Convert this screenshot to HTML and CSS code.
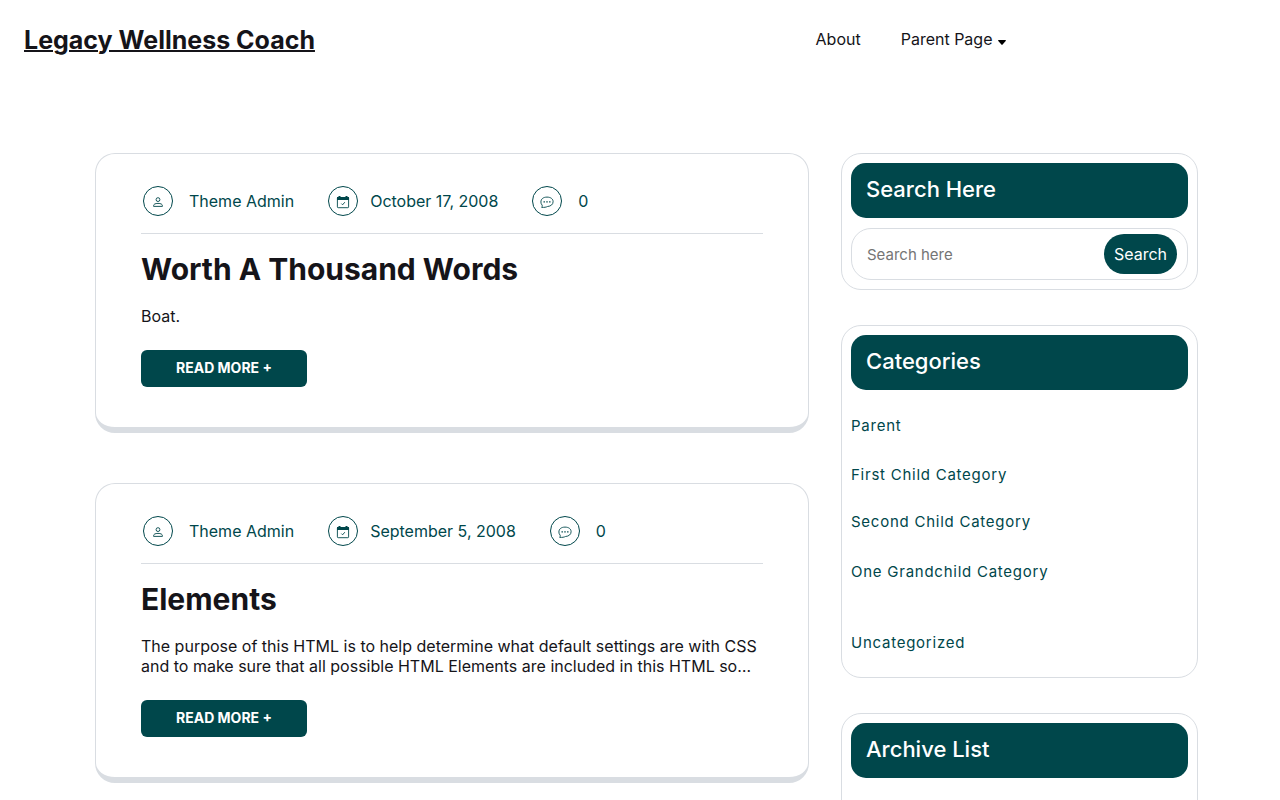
FILE: index.html
```
<!DOCTYPE html>
<html lang="en">
  <head>
    <meta charset="utf-8">
    <meta name="viewport" content="width=device-width, initial-scale=1">
    <title>Legacy Wellness Coach</title>
    <link rel="stylesheet" href="styles.css">
  </head>

  <body>
    <!-- shared icons -->
    <svg class="sprite" aria-hidden="true">
      <symbol id="icon-user" viewBox="0 0 14 14">
        <circle cx="7" cy="4.6" r="1.9"/>
        <path d="M2.6 11.4V10.7C2.6 9.2 4.2 8.4 7 8.4s4.4.8 4.4 2.3v.7z"/>
      </symbol>
      <symbol id="icon-date" viewBox="0 0 14 14">
        <rect x="1.4" y="2.5" width="11.2" height="10.2" rx="0.8"/>
        <path class="solid" d="M1 2h1.5V1h2v1h5V1h2v1H13v3H1z"/>
        <path d="M5.4 8.6l1.2 1.2 2.2-2.6"/>
      </symbol>
      <symbol id="icon-comment" viewBox="0 0 14 14">
        <path d="M1.7 12.4c.5-.7.6-1.3.5-2.2C1.3 9.300.9 8.300.9 7c0-3 2.300-4.900 6.100-4.900s6.100 1.900 6.100 4.600-2.300 4.600-5.600 4.800c-1.300.7-3.300 1-5.800.9z"/>
        <path class="solid" d="M3.500 6.200h1.400v1.400H3.500zM6.300 6.200h1.400v1.400H6.300zM9.100 6.200h1.400v1.400H9.100z"/>
      </symbol>
    </svg>

    <header class="site-header">
      <a class="site-title" href="#">Legacy Wellness Coach</a>
      <nav class="main-nav">
        <a href="#">About</a>
        <a href="#">Parent Page
          <svg class="caret" viewBox="0 0 8 5" aria-hidden="true"><path d="M.7 0h6.6c.6 0 .9.6.4 1L4.6 4.6c-.4.4-.8.4-1.2 0L.3 1C-.2.6.1 0 .7 0z"/></svg>
        </a>
      </nav>
    </header>

    <div class="container">
      <main class="posts">
        <article class="post">
          <div class="post-meta">
            <a class="meta" href="#"><span class="circle"><svg><use href="#icon-user"/></svg></span>Theme Admin</a>
            <a class="meta meta-date" href="#"><span class="circle"><svg><use href="#icon-date"/></svg></span>October 17, 2008</a>
            <a class="meta" href="#"><span class="circle"><svg><use href="#icon-comment"/></svg></span>0</a>
          </div>
          <h2 class="post-title">Worth A Thousand Words</h2>
          <p class="excerpt">Boat.</p>
          <a class="read-more" href="#">READ MORE +</a>
        </article>

        <article class="post">
          <div class="post-meta">
            <a class="meta" href="#"><span class="circle"><svg><use href="#icon-user"/></svg></span>Theme Admin</a>
            <a class="meta meta-date" href="#"><span class="circle"><svg><use href="#icon-date"/></svg></span>September 5, 2008</a>
            <a class="meta" href="#"><span class="circle"><svg><use href="#icon-comment"/></svg></span>0</a>
          </div>
          <h2 class="post-title">Elements</h2>
          <p class="excerpt">The purpose of this HTML is to help determine what default settings are with CSS and to make sure that all possible HTML Elements are included in this HTML so…</p>
          <a class="read-more" href="#">READ MORE +</a>
        </article>
      </main>

      <aside class="sidebar">
        <section class="widget">
          <h3 class="widget-title">Search Here</h3>
          <form class="search-form">
            <input type="search" placeholder="Search here" aria-label="Search here">
            <button type="submit">Search</button>
          </form>
        </section>

        <section class="widget">
          <h3 class="widget-title">Categories</h3>
          <ul class="categories">
            <li><a href="#">Parent</a>
              <ul>
                <li><a href="#">First Child Category</a></li>
                <li><a href="#">Second Child Category</a>
                  <ul>
                    <li><a href="#">One Grandchild Category</a></li>
                  </ul>
                </li>
              </ul>
            </li>
            <li><a href="#">Uncategorized</a></li>
          </ul>
        </section>

        <section class="widget archive">
          <h3 class="widget-title">Archive List</h3>
        </section>
      </aside>
    </div>
  </body>
</html>
```

FILE: styles.css
```
* {
  box-sizing: border-box;
}

body {
  margin: 0;
  font-family: Inter, sans-serif;
  font-size: 16px;
  line-height: 20px;
  color: #151419;
  background: #fff;
}

a {
  color: inherit;
  text-decoration: none;
}

.sprite {
  display: none;
}

/* header */
.site-header {
  display: flex;
  justify-content: space-between;
  align-items: center;
  padding: 24px;
}

.site-title {
  font-size: 25px;
  line-height: 32px;
  font-weight: 700;
  text-decoration: underline;
  text-decoration-thickness: 2px;
}

.main-nav {
  display: flex;
  gap: 40px;
  margin: 0 250px 2px 0;
}

.caret {
  width: 8px;
  height: 5px;
  margin-left: 1px;
}

/* layout */
.container {
  display: grid;
  grid-template-columns: minmax(0, 2fr) minmax(0, 1fr);
  gap: 32px;
  padding: 73px 82px 50px 95px;
}

.posts {
  display: flex;
  flex-direction: column;
  gap: 50px;
}

.sidebar {
  display: flex;
  flex-direction: column;
  gap: 35px;
}

/* posts */
.post {
  padding: 32px 45px 40px;
  border: 1px solid #d9dde2;
  border-bottom-width: 6px;
  border-radius: 20px;
}

.post-meta {
  display: flex;
  flex-wrap: wrap;
  gap: 34px;
  padding: 0 2px 17px;
  border-bottom: 1px solid #d9dde2;
  color: #00474b;
}

.meta {
  display: flex;
  align-items: center;
  gap: 16px;
}

.meta-date {
  gap: 12px;
}

.circle {
  display: flex;
  align-items: center;
  justify-content: center;
  width: 30px;
  height: 30px;
  padding-top: 2px;
  border: 1px solid #00474b;
  border-radius: 50%;
}

.circle svg {
  width: 14px;
  height: 14px;
  fill: none;
  stroke: #00474b;
  stroke-width: 0.9;
}

.solid {
  fill: #00474b;
  stroke: none;
}

.post-title {
  margin: 17px 0 19px;
  font-size: 30px;
  line-height: 36px;
  font-weight: 700;
}

.excerpt {
  margin: 0 0 24px;
}

.read-more {
  display: block;
  width: fit-content;
  padding: 8px 35px 9px;
  border-radius: 6px;
  background: #00474b;
  color: #fff;
  font-size: 14px;
  font-weight: 700;
}

/* sidebar */
.widget {
  padding: 9px;
  border: 1px solid #d9dde2;
  border-radius: 20px;
}

.widget-title {
  margin: 0;
  padding: 13px 15px 16px;
  border-radius: 15px;
  background: #00474b;
  color: #fff;
  font-size: 22px;
  line-height: 26px;
  font-weight: 500;
}

.search-form {
  display: flex;
  align-items: center;
  margin-top: 10px;
  padding: 5px 10px 5px 15px;
  border: 1px solid #d9dde2;
  border-radius: 20px;
}

.search-form input {
  flex: 1;
  min-width: 0;
  padding: 0;
  border: 0;
  outline: 0;
  background: none;
  font: 15px Inter, sans-serif;
}

.search-form input::placeholder {
  color: #757575;
}

.search-form button {
  height: 40px;
  padding: 0 10px;
  border: 0;
  border-radius: 20px;
  background: #00474b;
  color: #fff;
  font: 16px Inter, sans-serif;
  cursor: pointer;
}

.categories,
.categories ul {
  margin: 0;
  padding: 0;
  list-style: none;
}

.categories {
  padding: 26px 0 15px;
  font-size: 15px;
  letter-spacing: 0.05em;
  color: #00474b;
}

.categories ul {
  padding: 29px 0 24px;
}

.categories li + li {
  margin-top: 27px;
}

.categories ul ul {
  padding: 30px 0 0;
}

.archive {
  min-height: 160px;
}
```
